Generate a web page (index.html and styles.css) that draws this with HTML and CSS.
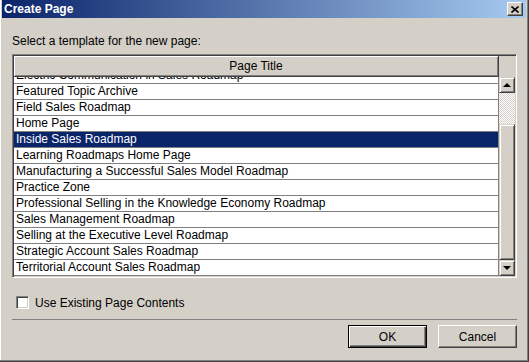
FILE: index.html
```html
<!DOCTYPE html>
<html>
<head>
    <title>Create Page</title>
    <link rel="stylesheet" href="styles.css">
</head>
<body>
    <div class="window">
        <div class="titlebar">
            <span class="title">Create Page</span>
            <span class="close">
                <svg width="8" height="7" viewBox="0 0 8 7">
                    <path d="M0.5 0.5 L7.5 6.5 M7.5 0.5 L0.5 6.5" stroke="#000" stroke-width="1.6" fill="none"/>
                </svg>
            </span>
        </div>

        <div class="content">
            <div class="prompt">Select a template for the new page:</div>

            <div class="listbox">
                <div class="table">
                    <div class="head">Page Title</div>
                    <div class="rows">
                        <div class="row first">Electric Communication in Sales Roadmap</div>
                        <div class="row">Featured Topic Archive</div>
                        <div class="row">Field Sales Roadmap</div>
                        <div class="row">Home Page</div>
                        <div class="row selected">Inside Sales Roadmap</div>
                        <div class="row">Learning Roadmaps Home Page</div>
                        <div class="row">Manufacturing a Successful Sales Model Roadmap</div>
                        <div class="row">Practice Zone</div>
                        <div class="row">Professional Selling in the Knowledge Economy Roadmap</div>
                        <div class="row">Sales Management Roadmap</div>
                        <div class="row">Selling at the Executive Level Roadmap</div>
                        <div class="row">Strategic Account Sales Roadmap</div>
                        <div class="row">Territorial Account Sales Roadmap</div>
                    </div>
                </div>
                <div class="scroll">
                    <div class="corner"></div>
                    <div class="arrow up"><span class="tri-up"></span></div>
                    <div class="track"></div>
                    <div class="thumb"></div>
                    <div class="arrow down"><span class="tri-down"></span></div>
                </div>
            </div>

            <label class="check">
                <span class="box"></span>
                <span>Use Existing Page Contents</span>
            </label>

            <div class="sep"></div>

            <div class="buttons">
                <button class="btn default">OK</button>
                <button class="btn">Cancel</button>
            </div>
        </div>
    </div>
</body>
</html>
```

FILE: styles.css
```css
body {
  margin: 0;
  background-color: #d4d0c8;
  font-family: "Liberation Sans", Arial, sans-serif;
  font-size: 12px;
  color: #000;
}

.window {
  width: 529px;
  height: 362px;
  box-sizing: border-box;
  padding: 0 2px 2px 2px;
  border-right: 1px solid #404040;
  border-bottom: 1px solid #404040;
  box-shadow: inset -1px -1px #808080, inset 1px 0 #fff;
  display: flex;
  flex-direction: column;
}

.titlebar {
  height: 18px;
  background: linear-gradient(to right, #0a246a, #a6caf0);
  display: flex;
  align-items: center;
  justify-content: space-between;
  padding: 0 3px 0 2px;
}

.title {
  color: #fff;
  font-weight: bold;
  font-size: 12px;
}

.close {
  width: 16px;
  height: 14px;
  box-sizing: border-box;
  background-color: #d4d0c8;
  border-top: 1px solid #fff;
  border-left: 1px solid #fff;
  border-right: 1px solid #404040;
  border-bottom: 1px solid #404040;
  box-shadow: inset -1px -1px #808080;
  display: flex;
  align-items: center;
  justify-content: center;
}

.close svg {
  display: block;
}

.content {
  flex: 1;
  padding: 0 9px 0 10px;
  display: flex;
  flex-direction: column;
}

.prompt {
  line-height: 14px;
  margin-top: 16px;
}

.listbox {
  margin-top: 6px;
  height: 224px;
  box-sizing: border-box;
  border-top: 1px solid #808080;
  border-left: 1px solid #808080;
  border-right: 1px solid #fff;
  border-bottom: 1px solid #fff;
  box-shadow: inset 1px 1px #404040, inset -1px -1px #d4d0c8;
  padding: 1px;
  display: flex;
}

.table {
  flex: 1;
  display: flex;
  flex-direction: column;
  overflow: hidden;
}

.head {
  height: 21px;
  box-sizing: border-box;
  line-height: 20px;
  text-align: center;
  background-color: #d4d0c8;
  border-right: 1px solid #404040;
  border-bottom: 1px solid #404040;
  box-shadow: inset 1px 1px #fff, inset -1px -1px #808080;
}

.rows {
  flex: 1;
  background-color: #fff;
  overflow: hidden;
  border-right: 1px solid #808080;
}

.row {
  height: 15px;
  line-height: 15px;
  border-bottom: 1px solid #808080;
  padding-left: 2px;
  white-space: nowrap;
}

.row.first {
  margin-top: -9px;
}

.row.selected {
  background-color: #0a246a;
  color: #fff;
}

.scroll {
  width: 16px;
  display: flex;
  flex-direction: column;
}

.corner {
  height: 21px;
  background-color: #d4d0c8;
}

.arrow,
.thumb {
  box-sizing: border-box;
  background-color: #d4d0c8;
  border-top: 1px solid #d4d0c8;
  border-left: 1px solid #d4d0c8;
  border-right: 1px solid #404040;
  border-bottom: 1px solid #404040;
  box-shadow: inset 1px 1px #fff, inset -1px -1px #808080;
}

.arrow {
  height: 16px;
  display: flex;
  align-items: center;
  justify-content: center;
}

.tri-up {
  width: 0;
  height: 0;
  border-left: 4px solid transparent;
  border-right: 4px solid transparent;
  border-bottom: 4px solid #000;
}

.tri-down {
  width: 0;
  height: 0;
  border-left: 4px solid transparent;
  border-right: 4px solid transparent;
  border-top: 4px solid #000;
}

.track {
  height: 31px;
  background: repeating-conic-gradient(#fff 0 25%, #d4d0c8 0 50%) 0 0 / 2px 2px;
}

.thumb {
  flex: 1;
}

.check {
  display: flex;
  align-items: center;
  margin-top: 18px;
  margin-left: 4px;
  height: 13px;
}

.box {
  width: 13px;
  height: 13px;
  box-sizing: border-box;
  background-color: #fff;
  border-top: 1px solid #808080;
  border-left: 1px solid #808080;
  border-right: 1px solid #fff;
  border-bottom: 1px solid #fff;
  box-shadow: inset 1px 1px #404040, inset -1px -1px #d4d0c8;
  margin-right: 6px;
}

.sep {
  height: 1px;
  background-color: #808080;
  margin-top: 10px;
}

.buttons {
  display: flex;
  justify-content: flex-end;
  gap: 11px;
  margin-top: 5px;
}

.btn {
  width: 79px;
  height: 23px;
  box-sizing: border-box;
  font-family: "Liberation Sans", Arial, sans-serif;
  font-size: 12px;
  color: #000;
  background-color: #d4d0c8;
  border-top: 1px solid #fff;
  border-left: 1px solid #fff;
  border-right: 1px solid #404040;
  border-bottom: 1px solid #404040;
  box-shadow: inset -1px -1px #808080;
  padding: 0;
}

.btn.default {
  border: 1px solid #000;
  box-shadow: inset 1px 1px #fff, inset -1px -1px #404040, inset -2px -2px #808080;
}
```
